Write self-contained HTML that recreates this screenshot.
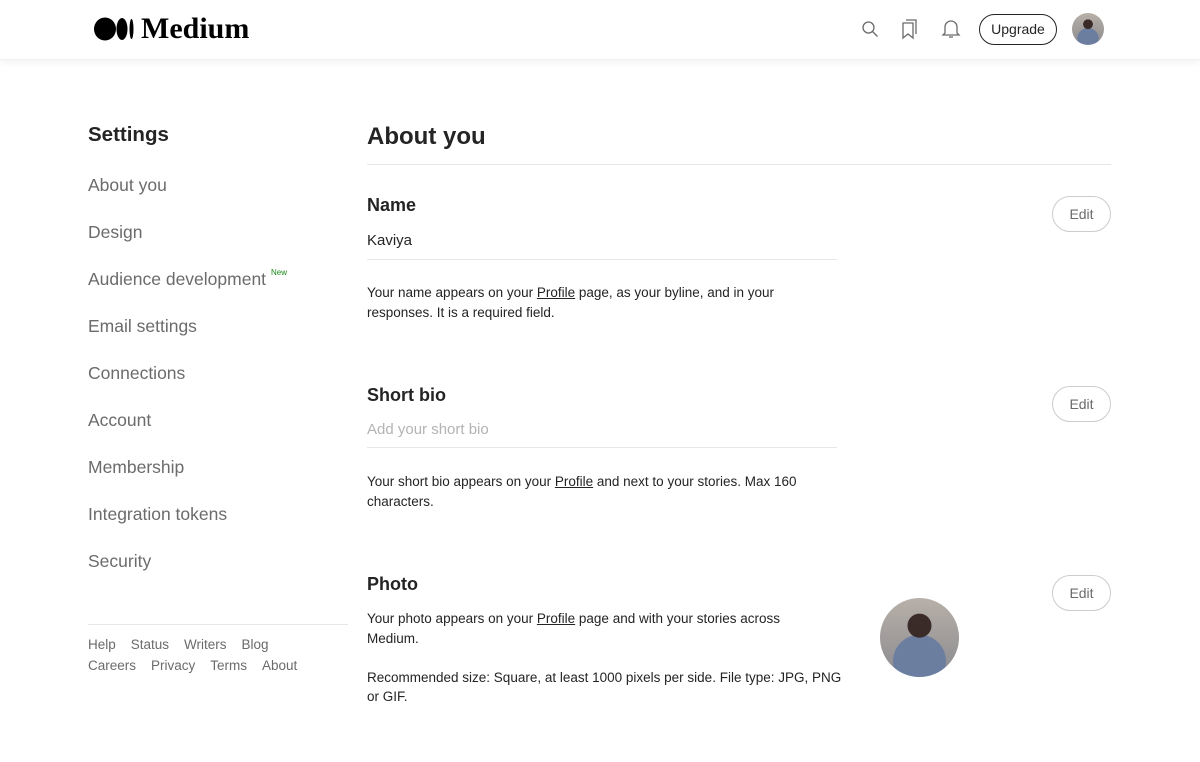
<!DOCTYPE html>
<html><head><style>
*{margin:0;padding:0;box-sizing:border-box}
body{width:1200px;height:762px;background:#fff;font-family:"Liberation Sans",sans-serif;color:#242424;position:relative;overflow:hidden}
.hdr{position:absolute;left:0;top:0;width:1200px;height:60px;background:#fff;box-shadow:0 2px 8px rgba(0,0,0,.06);border-bottom:1px solid #f2f2f2}
.a{position:absolute;white-space:nowrap}
.nav{font-size:17.5px;color:#6b6b6b;left:88px}
.h{font-size:18px;font-weight:bold;left:367px}
.p{font-size:13.5px;line-height:19.5px;color:#242424;left:367px}
.u{text-decoration:underline}
.edit{position:absolute;left:1052px;width:59px;height:36px;border:1px solid #ccc;border-radius:18px;font-size:14px;color:#6b6b6b;text-align:center;line-height:34px}
.line{position:absolute;left:367px;width:470px;height:1px;background:#e6e6e6}
.f{font-size:14px;color:#6b6b6b}
.av{background:radial-gradient(circle at 50% 35%,#3a2a28 0 18%,transparent 19%),radial-gradient(circle at 50% 80%,#6b7ea0 0 35%,transparent 36%),linear-gradient(#b8b0a8,#8a8a90);border-radius:50%;position:absolute}
</style></head><body>
<div class="hdr">
<svg class="a" style="left:94px;top:17px" width="42" height="24" viewBox="0 0 42 24"><ellipse cx="11" cy="12" rx="11" ry="11.5" fill="#000"/><ellipse cx="28" cy="12" rx="5.5" ry="11" fill="#000"/><ellipse cx="37.5" cy="12" rx="2" ry="10" fill="#000"/></svg>
<div class="a" style="left:141px;top:12px;font-family:'Liberation Serif',serif;font-weight:bold;font-size:30px;color:#000;letter-spacing:0px">Medium</div>
<svg class="a" style="left:861px;top:20px" width="18" height="18" viewBox="0 0 18 18" fill="none" stroke="#6b6b6b" stroke-width="1.3"><circle cx="7.5" cy="7.5" r="5.5"/><path d="M11.5 11.5l5 5"/></svg>
<svg class="a" style="left:900px;top:18px" width="20" height="22" viewBox="0 0 20 22" fill="none" stroke="#6b6b6b" stroke-width="1.3"><path d="M3 5h10v15l-5-4-5 4z"/><path d="M6 2h10v14"/></svg>
<svg class="a" style="left:941px;top:18px" width="20" height="22" viewBox="0 0 20 22" fill="none" stroke="#6b6b6b" stroke-width="1.3"><path d="M4 15V9a6 6 0 0112 0v6l2 2H2z"/><path d="M8 19h4"/></svg>
<div class="a" style="left:979px;top:14px;width:78px;height:31px;border:1px solid #242424;border-radius:16px;font-size:14px;text-align:center;line-height:29px">Upgrade</div>
<div class="av" style="left:1072px;top:13px;width:32px;height:32px"></div>
</div>
<div class="a" style="left:88px;top:123px;font-size:20.5px;font-weight:bold">Settings</div>
<div class="a nav" style="top:175px">About you</div>
<div class="a nav" style="top:222px">Design</div>
<div class="a nav" style="top:269px">Audience development</div>
<div class="a" style="left:271px;top:268px;font-size:8px;color:#1a8917">New</div>
<div class="a nav" style="top:316px">Email settings</div>
<div class="a nav" style="top:363px">Connections</div>
<div class="a nav" style="top:410px">Account</div>
<div class="a nav" style="top:457px">Membership</div>
<div class="a nav" style="top:504px">Integration tokens</div>
<div class="a nav" style="top:551px">Security</div>
<div class="a" style="left:88px;top:624px;width:260px;height:1px;background:#e6e6e6"></div>
<div class="a f" style="left:88px;top:637px;font-size:13.5px">Help&nbsp;&nbsp;&nbsp;&nbsp;Status&nbsp;&nbsp;&nbsp;&nbsp;Writers&nbsp;&nbsp;&nbsp;&nbsp;Blog</div>
<div class="a f" style="left:88px;top:658px;font-size:13.5px">Careers&nbsp;&nbsp;&nbsp;&nbsp;Privacy&nbsp;&nbsp;&nbsp;&nbsp;Terms&nbsp;&nbsp;&nbsp;&nbsp;About</div>

<div class="a" style="left:367px;top:123px;font-size:24px;font-weight:bold">About you</div>
<div class="a" style="left:367px;top:164px;width:744px;height:1px;background:#e6e6e6"></div>

<div class="a h" style="top:195px">Name</div>
<div class="edit" style="top:196px">Edit</div>
<div class="a" style="left:367px;top:232px;font-size:15px">Kaviya</div>
<div class="line" style="top:259px"></div>
<div class="a p" style="top:283px">Your name appears on your <span class="u">Profile</span> page, as your byline, and in your<br>responses. It is a required field.</div>

<div class="a h" style="top:385px">Short bio</div>
<div class="edit" style="top:386px">Edit</div>
<div class="a" style="left:367px;top:421px;font-size:15px;color:#b3b3b3">Add your short bio</div>
<div class="line" style="top:447px"></div>
<div class="a p" style="top:472px">Your short bio appears on your <span class="u">Profile</span> and next to your stories. Max 160<br>characters.</div>

<div class="a h" style="top:574px">Photo</div>
<div class="edit" style="top:575px">Edit</div>
<div class="a p" style="top:609px">Your photo appears on your <span class="u">Profile</span> page and with your stories across<br>Medium.<br><br>Recommended size: Square, at least 1000 pixels per side. File type: JPG, PNG<br>or GIF.</div>
<div class="av" style="left:880px;top:598px;width:79px;height:79px"></div>
</body></html>
